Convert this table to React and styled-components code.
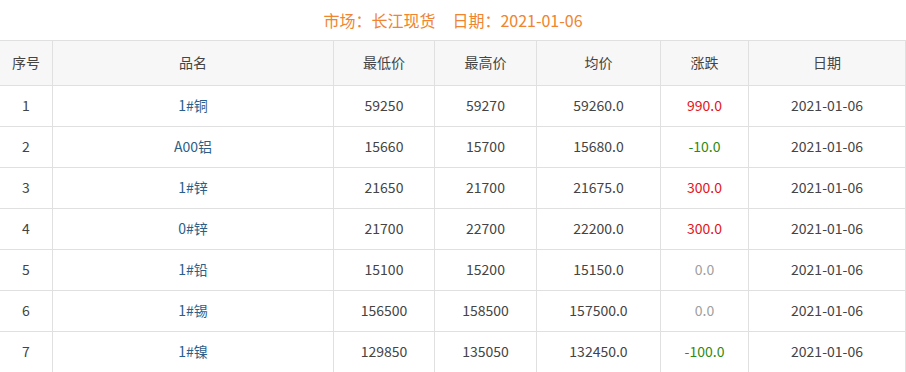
import React from "react";
import styled, { createGlobalStyle } from "styled-components";

const Global = createGlobalStyle`
  html, body { margin: 0; padding: 0; background: #fff; }
  body { font-family: "Noto Sans CJK SC", "Microsoft YaHei", sans-serif; }
`;

const Page = styled.div`
  width: 906px;
`;

const Title = styled.div`
  height: 40px;
  display: flex;
  align-items: center;
  justify-content: center;
  gap: 17px;
  color: #f0842f;
  font-size: 16px;
  padding-bottom: 1px;
  box-sizing: border-box;
`;

const Grid = styled.div`
  display: grid;
  grid-template-columns: 53px 281px 101px 102px 124px 88px 157px;
  border-top: 1px solid #e0e0e0;
`;

const Cell = styled.div`
  height: ${(p) => (p.$head ? "45px" : "41px")};
  box-sizing: border-box;
  padding-bottom: 3px;
  display: flex;
  align-items: center;
  justify-content: center;
  border-right: 1px solid #e0e0e0;
  border-bottom: 1px solid #e0e0e0;
  background: ${(p) => (p.$head ? "#f7f7f7" : "#fff")};
  font-size: 14px;
  color: ${(p) => p.$color || "#444"};
`;

const headers = ["序号", "品名", "最低价", "最高价", "均价", "涨跌", "日期"];

const rows = [
  ["1", "1#铜", "59250", "59270", "59260.0", "990.0"],
  ["2", "A00铝", "15660", "15700", "15680.0", "-10.0"],
  ["3", "1#锌", "21650", "21700", "21675.0", "300.0"],
  ["4", "0#锌", "21700", "22700", "22200.0", "300.0"],
  ["5", "1#铅", "15100", "15200", "15150.0", "0.0"],
  ["6", "1#锡", "156500", "158500", "157500.0", "0.0"],
  ["7", "1#镍", "129850", "135050", "132450.0", "-100.0"],
];

const changeColor = (v) => {
  const n = parseFloat(v);
  if (n > 0) return "#e3141c";
  if (n < 0) return "#2f8a13";
  return "#a0a0a0";
};

export default function App() {
  return (
    <Page>
      <Global />
      <Title>
        <span>市场：长江现货</span>
        <span>日期：2021-01-06</span>
      </Title>
      <Grid>
        {headers.map((h) => (
          <Cell key={h} $head>
            {h}
          </Cell>
        ))}
        {rows.map((r) => (
          <React.Fragment key={r[0]}>
            <Cell>{r[0]}</Cell>
            <Cell $color="#2b5f8a">{r[1]}</Cell>
            <Cell>{r[2]}</Cell>
            <Cell>{r[3]}</Cell>
            <Cell>{r[4]}</Cell>
            <Cell $color={changeColor(r[5])}>{r[5]}</Cell>
            <Cell>2021-01-06</Cell>
          </React.Fragment>
        ))}
      </Grid>
    </Page>
  );
}
